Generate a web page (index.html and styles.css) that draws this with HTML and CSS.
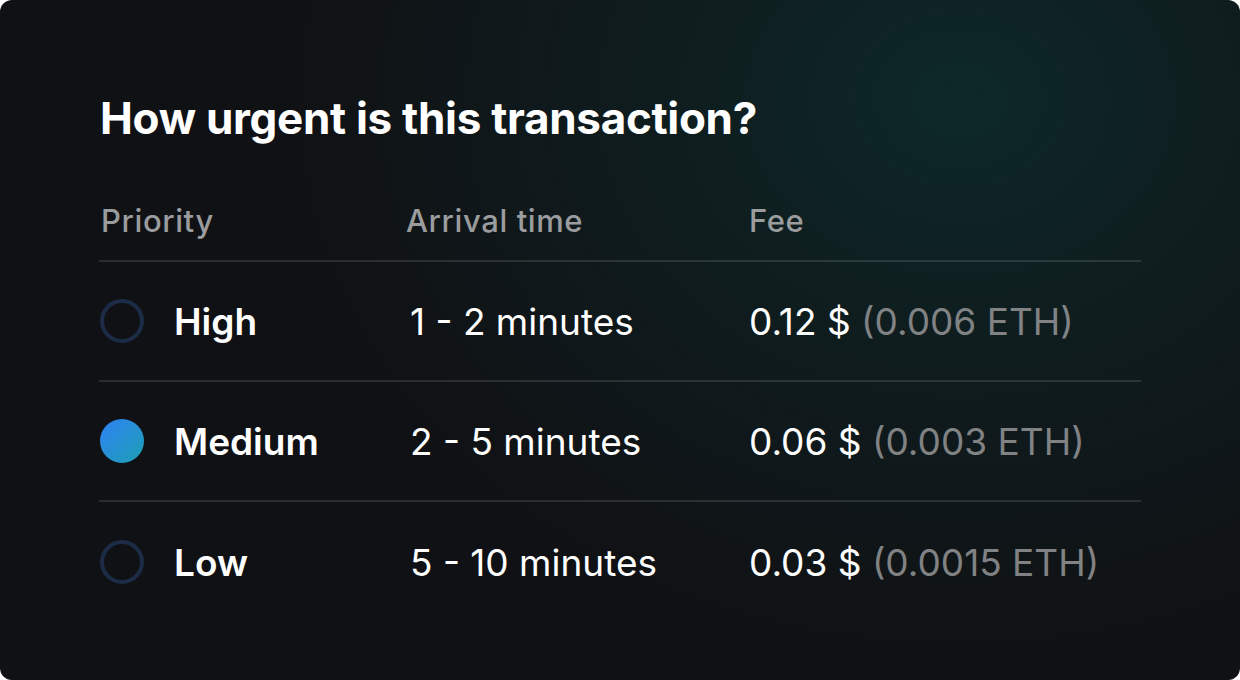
FILE: index.html
```html
<!DOCTYPE html>
<html>
<head>
<meta charset="utf-8">
<link rel="stylesheet" href="styles.css">
</head>
<body>
<div class="card">
  <h1 class="title">How urgent is this transaction?</h1>
  <div class="table">
    <div class="row head">
      <div class="c1">Priority</div>
      <div class="c2">Arrival time</div>
      <div class="c3">Fee</div>
    </div>
    <div class="row">
      <div class="c1"><span class="radio"></span><span class="name">High</span></div>
      <div class="c2">1 - 2 minutes</div>
      <div class="c3">0.12 $ <span class="eth">(0.006 ETH)</span></div>
    </div>
    <div class="row">
      <div class="c1"><span class="radio on"></span><span class="name">Medium</span></div>
      <div class="c2">2 - 5 minutes</div>
      <div class="c3">0.06 $ <span class="eth">(0.003 ETH)</span></div>
    </div>
    <div class="row last">
      <div class="c1"><span class="radio"></span><span class="name">Low</span></div>
      <div class="c2">5 - 10 minutes</div>
      <div class="c3">0.03 $ <span class="eth">(0.0015 ETH)</span></div>
    </div>
  </div>
</div>
</body>
</html>
```
FILE: styles.css
```css
html, body { margin: 0; padding: 0; background: #ffffff; }
body { width: 1240px; height: 680px; font-family: Inter, "Noto Sans", sans-serif; }
.card {
  width: 1240px; height: 680px; box-sizing: border-box;
  border-radius: 12px;
  background:
    radial-gradient(ellipse 680px 560px at 960px 100px, rgba(13,40,41,1) 0%, rgba(14,36,37,0.65) 40%, rgba(16,17,20,0) 100%),
    #101114;
  padding: 94px 99px 0 99px;
  color: #fff;
}
.title { margin: 0 0 0 1px; font-size: 44px; font-weight: 700; line-height: 48px; letter-spacing: -0.3px; }
.table { margin-top: 42px; }
.row { display: flex; align-items: center; height: 120px; border-bottom: 2px solid rgba(255,255,255,0.12); box-sizing: border-box; font-size: 37px; }
.row.last { border-bottom: none; }
.row.head { height: 78px; padding-bottom: 4px; font-size: 31px; color: #9a9c9e; font-weight: 500; letter-spacing: 0.6px; }
.c1 { width: 305px; display: flex; align-items: center; }
.row.head .c1 { padding-left: 2px; box-sizing: border-box; }
.c2 { width: 345px; box-sizing: border-box; }
.row.head .c2 { padding-left: 2px; }
.row:not(.head) .c2 { padding-left: 6px; }
.c3 { flex: 1; }
.radio { width: 44px; height: 44px; box-sizing: border-box; border-radius: 50%; border: 4px solid #1c2c47; margin-left: 1px; margin-right: 30px; }
.radio.on { border: none; background: linear-gradient(135deg, #2f82f4, #1da0b4); }
.name { font-weight: 600; }
.eth { color: #808284; }
```
